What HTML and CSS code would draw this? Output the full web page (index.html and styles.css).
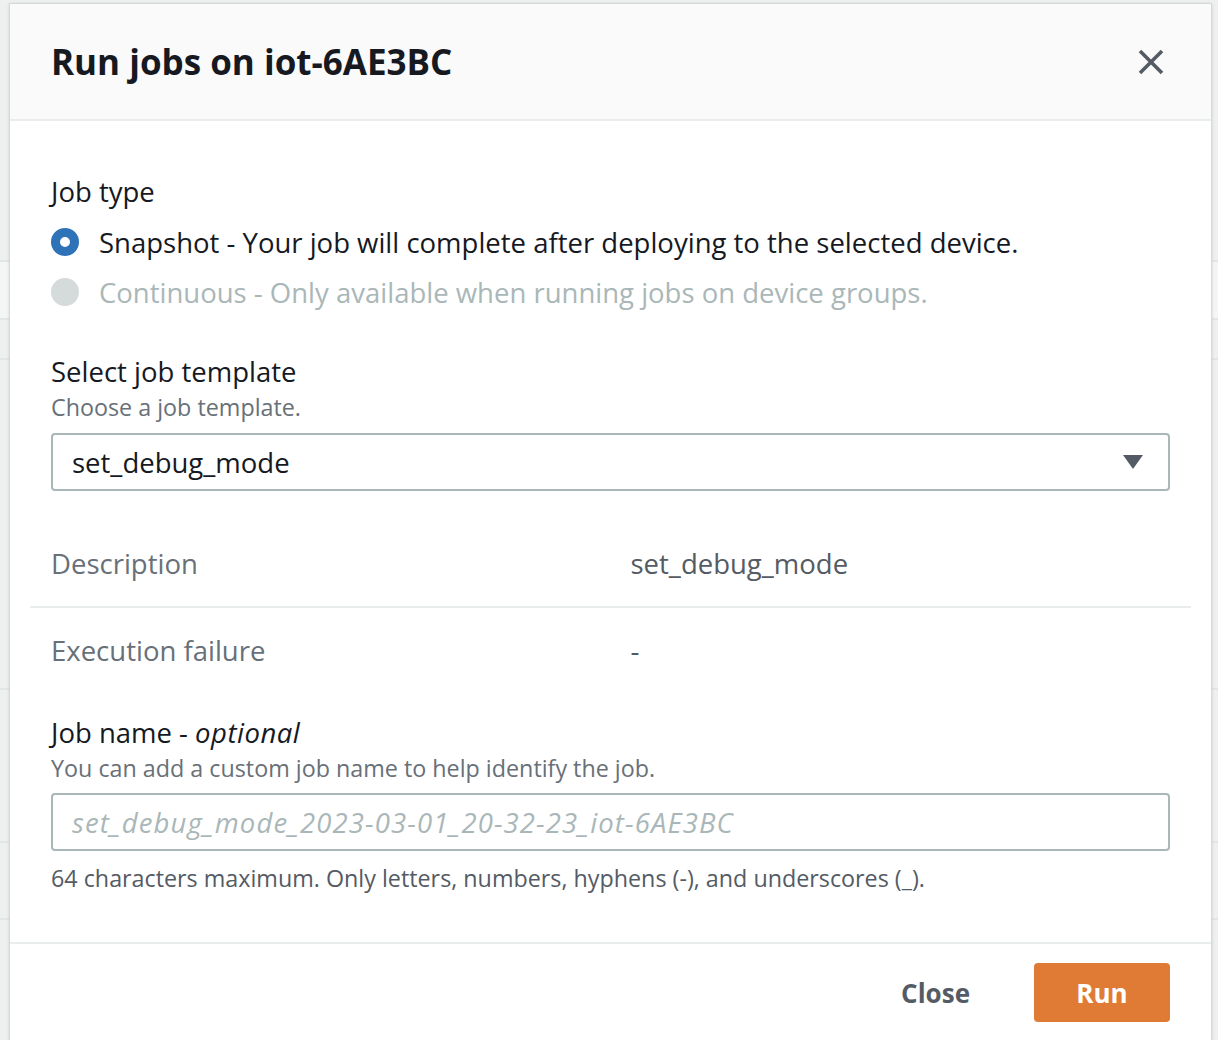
FILE: index.html
```html
<!DOCTYPE html>
<html lang="en">
<head>
<meta charset="utf-8">
<title>Run jobs on iot-6AE3BC</title>
<link rel="stylesheet" href="styles.css">
</head>
<body>
<div class="backdrop">
  <div class="bg-row r1"></div>
  <div class="bg-row r2"></div>
  <div class="bg-row r3"></div>
  <div class="bg-row r4"></div>
  <div class="bg-row r5"></div>
  <div class="bg-row r6"></div>
</div>
<div class="modal">
  <header class="modal-header">
    <h1 class="modal-title">Run jobs on iot-6AE3BC</h1>
    <button class="icon-close" aria-label="Close">
      <svg width="28" height="28" viewBox="0 0 28 28"><path d="M3 3 L25 25 M25 3 L3 25" stroke="#545b64" stroke-width="3.6" fill="none"/></svg>
    </button>
  </header>
  <div class="modal-body">
    <div class="field-label">Job type</div>
    <div class="radio-group">
      <label class="radio-row">
        <span class="radio checked"></span>
        <span class="radio-text">Snapshot - Your job will complete after deploying to the selected device.</span>
      </label>
      <label class="radio-row disabled">
        <span class="radio"></span>
        <span class="radio-text">Continuous - Only available when running jobs on device groups.</span>
      </label>
    </div>

    <div class="field-label gap-lg">Select job template</div>
    <div class="field-desc">Choose a job template.</div>
    <div class="select">
      <span class="select-value">set_debug_mode</span>
      <svg class="caret" width="20" height="14" viewBox="0 0 20 14"><path d="M0 0 H20 L10 14 Z" fill="#545b64"/></svg>
    </div>

    <div class="kv-list">
      <div class="kv-row bordered">
        <div class="kv-key">Description</div>
        <div class="kv-value">set_debug_mode</div>
      </div>
      <div class="kv-row">
        <div class="kv-key">Execution failure</div>
        <div class="kv-value">-</div>
      </div>
    </div>

    <div class="field-label gap-md">Job name - <i>optional</i></div>
    <div class="field-desc">You can add a custom job name to help identify the job.</div>
    <div class="input"><span class="placeholder">set_debug_mode_2023-03-01_20-32-23_iot-6AE3BC</span></div>
    <div class="field-hint">64 characters maximum. Only letters, numbers, hyphens (-), and underscores (_).</div>
  </div>
  <footer class="modal-footer">
    <button class="btn-link">Close</button>
    <button class="btn-primary">Run</button>
  </footer>
</div>
</body>
</html>
```

FILE: styles.css
```css
* { box-sizing: border-box; }
html, body { margin: 0; padding: 0; }
body {
  width: 1218px;
  height: 1040px;
  overflow: hidden;
  background: #eef0f0;
  font-family: "Open Sans", "Noto Sans", sans-serif;
  color: #16191f;
  position: relative;
}
.backdrop {
  display: flex;
  flex-direction: column;
}
.bg-row { border-bottom: 2px solid #e3e6e6; }
.r1 { height: 262px; }
.r2 { height: 58px; background: #f4f5f5; }
.r3 { height: 40px; }
.r4 { height: 330px; }
.r5 { height: 153px; }
.r6 { height: 77px; }

.modal {
  position: absolute;
  left: 10px;
  top: 4px;
  width: 1201px;
  height: 1036px;
  overflow: hidden;
  background: #fff;
  box-shadow: 0 0 0 1px #d5d9d9, -1px 0 3px rgba(0,0,0,0.12), 1px 0 3px rgba(0,0,0,0.12);
  display: flex;
  flex-direction: column;
}
.modal-header {
  height: 117px;
  flex: none;
  background: #fafafa;
  border-bottom: 2px solid #eaeded;
  display: flex;
  align-items: center;
  justify-content: space-between;
  padding: 0 46px 0 41px;
}
.modal-title {
  margin: 0;
  font-size: 35px;
  font-weight: 700;
  line-height: 40px;
  color: #16191f;
}
.icon-close {
  border: 0;
  background: none;
  padding: 0;
  width: 28px;
  height: 28px;
  display: flex;
}
.modal-body {
  flex: none;
  padding: 53px 41px 48px 41px;
}
.field-label {
  font-size: 27.5px;
  line-height: 36px;
  color: #16191f;
}
.field-label i { font-style: italic; letter-spacing: 0.5px; }
.gap-lg { margin-top: 37px; }
.gap-md { margin-top: 22px; }
.field-desc {
  font-size: 23.3px;
  line-height: 32px;
  color: #687078;
  margin-top: 1px;
}
.radio-group {
  margin-top: 7px;
  display: flex;
  flex-direction: column;
}
.radio-row {
  height: 50px;
  display: flex;
  align-items: center;
  gap: 20px;
  font-size: 27.5px;
}
.radio {
  width: 28px;
  height: 28px;
  border-radius: 50%;
  background: #d5dbdb;
  flex: none;
}
.radio.checked {
  background: #fff;
  border: 9px solid #2e73b8;
}
.radio-text { color: #16191f; }
.disabled .radio-text { color: #aab7b8; }
.select {
  margin-top: 10px;
  height: 58px;
  border: 2px solid #aab7b8;
  border-radius: 4px;
  display: flex;
  align-items: center;
  justify-content: space-between;
  padding: 0 25px 0 19px;
  font-size: 27.5px;
}
.kv-list {
  margin: 31px -21px 0 -21px;
}
.kv-row {
  display: grid;
  grid-template-columns: 1fr 1fr;
  gap: 40px;
  padding: 24px 21px 24px 21px;
  font-size: 27.5px;
  line-height: 36px;
}
.kv-row.bordered { border-bottom: 2px solid #eaeded; }
.kv-row + .kv-row { padding-top: 25px; }
.kv-key { color: #687078; }
.kv-value { color: #545b64; }
.input {
  margin-top: 9px;
  height: 58px;
  border: 2px solid #aab7b8;
  border-radius: 4px;
  display: flex;
  align-items: center;
  padding: 0 19px;
  font-size: 27.5px;
}
.placeholder {
  color: #aab7b8;
  font-style: italic;
  letter-spacing: 1.1px;
}
.field-hint {
  margin-top: 11px;
  font-size: 23.3px;
  line-height: 32px;
  color: #545b64;
}
.modal-footer {
  flex: 1;
  border-top: 2px solid #eaeded;
  display: flex;
  justify-content: flex-end;
  align-items: flex-start;
  gap: 34px;
  padding: 19px 41px 0 41px;
}
.btn-link {
  border: 0;
  background: none;
  font-family: inherit;
  font-size: 26px;
  font-weight: 700;
  color: #545b64;
  height: 59px;
  padding: 0 30px;
}
.btn-primary {
  border: 0;
  border-radius: 4px;
  background: #e07b36;
  color: #fff;
  font-family: inherit;
  font-size: 26px;
  font-weight: 700;
  width: 136px;
  height: 59px;
}
```
